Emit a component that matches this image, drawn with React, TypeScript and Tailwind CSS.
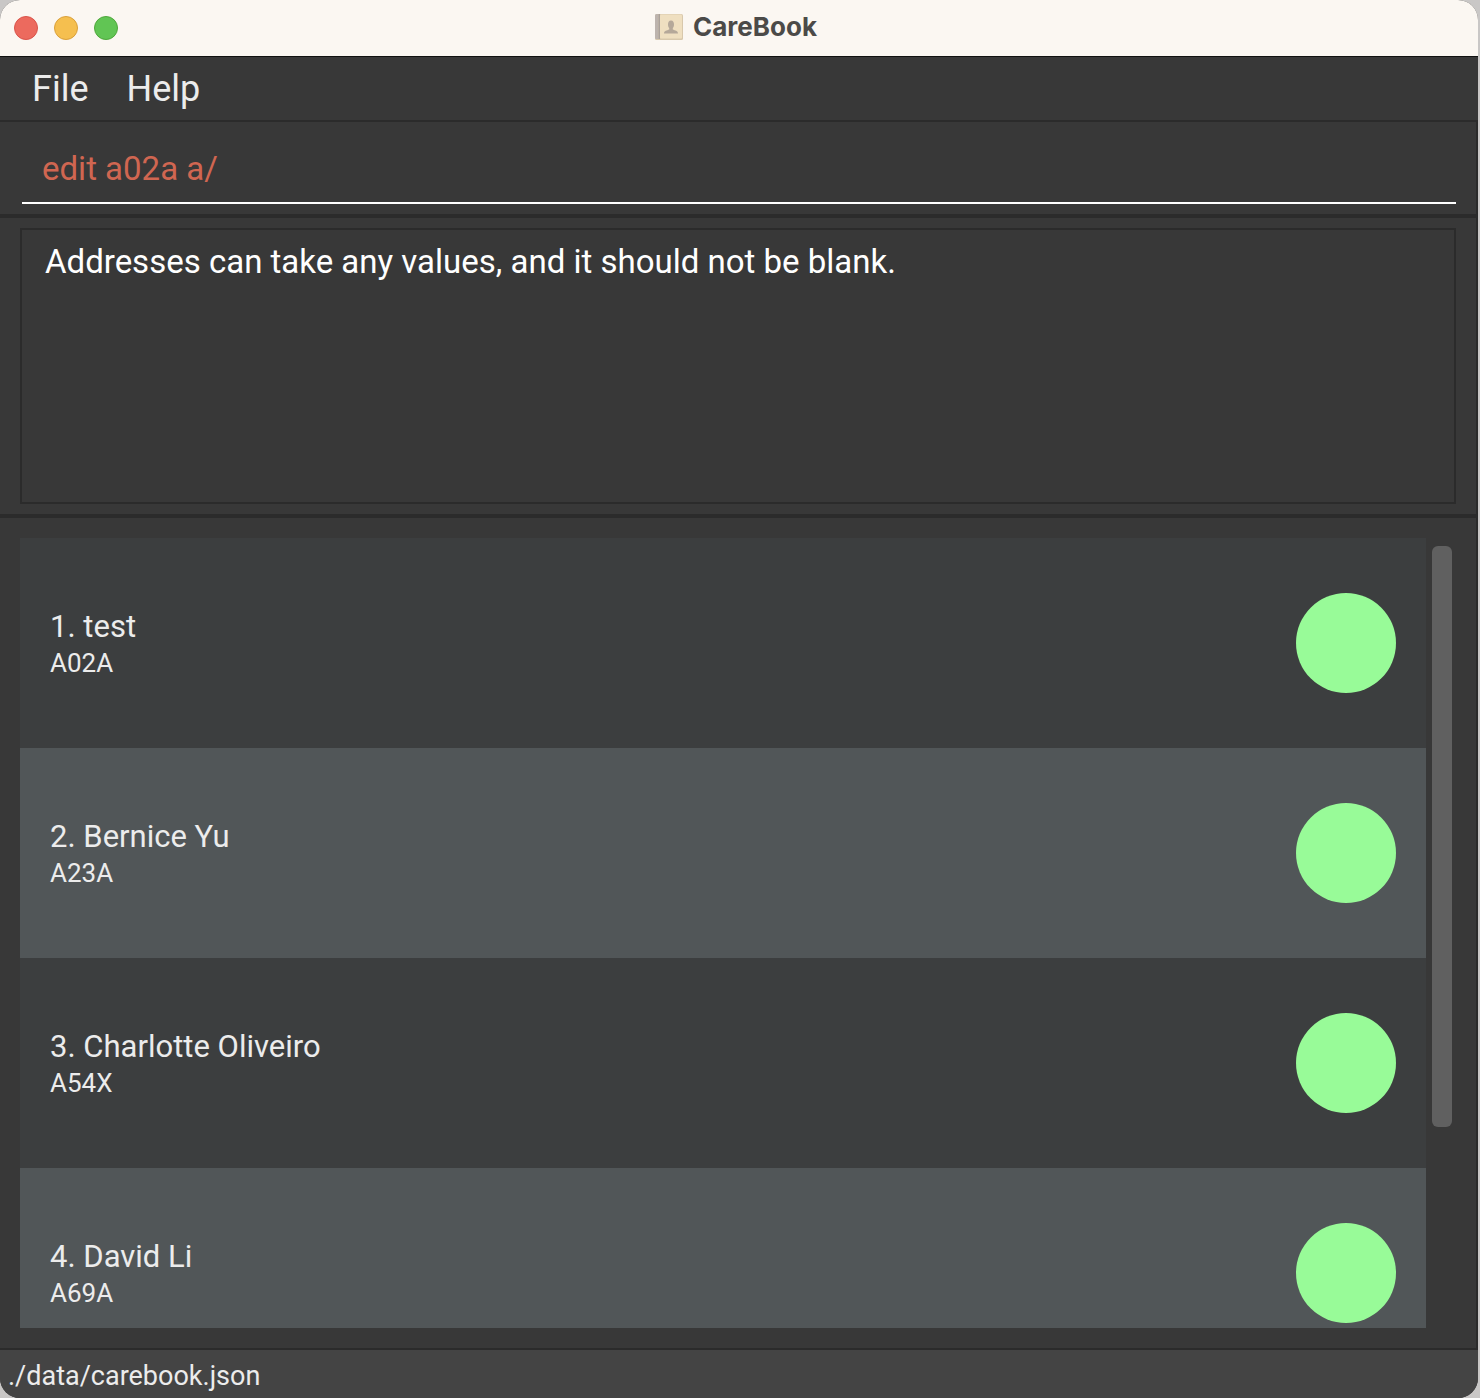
import React from "react";

const people = [
  { name: "test", ward: "A02A" },
  { name: "Bernice Yu", ward: "A23A" },
  { name: "Charlotte Oliveiro", ward: "A54X" },
  { name: "David Li", ward: "A69A" },
];

function BookIcon() {
  return (
    <svg viewBox="0 0 28 28" className="size-7" aria-hidden="true">
      <rect x="0" y="1" width="28" height="26" rx="1.5" fill="#d8c8ac" />
      <rect x="5" y="1.5" width="22" height="24" rx="1" fill="#efdfc0" />
      <path d="M1.500 1H3.500V26H1.500Q0 26 0 24.500V2.500Q0 1 1.500 1Z" fill="#bdb4ae" />
      <rect x="3.500" y="1" width="1.500" height="25" fill="#aaa19b" />
      <path
        d="M16 7.500C18.200 7.500 19 9.300 19 11.500C19 13.300 18.400 14.500 17.800 15.200V16.500C20 17.500 23 17.500 23 20.500H9C9 17.500 12 17.500 14.200 16.500V15.200C13.600 14.500 13 13.300 13 11.500C13 9.300 13.800 7.500 16 7.500Z"
        fill="#b5a899"
      />
    </svg>
  );
}

function TitleBar() {
  return (
    <header className="flex h-14 shrink-0 items-center bg-[#fbf7f2] pr-5 pl-3.5">
      <div className="flex flex-1 gap-4">
        <button aria-label="Close" className="size-6 rounded-full border border-[#d9544b] bg-[#ec6a5e]" />
        <button aria-label="Minimize" className="size-6 rounded-full border border-[#d9a03c] bg-[#f5bf4f]" />
        <button aria-label="Zoom" className="size-6 rounded-full border border-[#4fa73c] bg-[#61c554]" />
      </div>
      <div className="flex items-center gap-2.5 pb-0.5">
        <BookIcon />
        <h1 className="font-['Inter','Liberation_Sans',sans-serif] text-[26px] leading-8 font-bold text-[#4b4a48]">
          CareBook
        </h1>
      </div>
      <div className="flex-1" />
    </header>
  );
}

export default function App() {
  return (
    <div className="h-screen bg-[#c9c7c6] pr-0.5 font-['Roboto','Liberation_Sans',sans-serif]">
      <div className="flex h-full flex-col overflow-hidden rounded-[20px] bg-[#383838]">
        <TitleBar />
        <nav className="flex h-[66px] shrink-0 items-center gap-[38px] border-t border-b-2 border-t-[#111111] border-b-[#2b2b2b] px-8 text-4xl text-[#ececec]">
          <button>File</button>
          <button>Help</button>
        </nav>
        <main className="flex min-h-0 flex-1 flex-col border-r-2 border-[#2b2b2b]">
          <section className="border-b-4 border-[#2b2b2b] pr-5 pb-2.5 pl-[22px]">
            <input
              aria-label="Command"
              defaultValue="edit a02a a/"
              className="block h-[82px] w-full border-b-2 border-white bg-transparent px-5 pt-3 text-[33px] text-[#d06651] outline-none"
            />
          </section>
          <section className="border-b-4 border-[#2b2b2b] px-5 py-2.5">
            <textarea
              aria-label="Result"
              readOnly
              defaultValue="Addresses can take any values, and it should not be blank."
              className="block h-[276px] w-full resize-none border-2 border-[#2b2b2b] bg-transparent px-[23px] py-3 text-[33px] leading-10 text-white outline-none"
            />
          </section>
          <section className="flex min-h-0 flex-1 gap-1.5 py-5 pr-6 pl-5">
            <ol className="min-w-0 flex-1 overflow-hidden">
              {people.map((p, i) => (
                <li
                  key={p.name}
                  className="flex h-[210px] items-center justify-between bg-[#3c3e3f] px-[30px] even:bg-[#515658]"
                >
                  <div className="text-[#ececec]">
                    <h2 className="text-[31px] leading-10">
                      {i + 1}. {p.name}
                    </h2>
                    <p className="text-[26px] leading-8">{p.ward}</p>
                  </div>
                  <span className="size-[100px] rounded-full bg-[#98fb98]" />
                </li>
              ))}
            </ol>
            <div className="w-5 py-2">
              <div className="h-3/4 w-full rounded-md bg-[#606060]" />
            </div>
          </section>
        </main>
        <footer className="flex h-[50px] shrink-0 items-center border-t-2 border-[#2b2b2b] bg-[#444444] px-2 pt-1 text-[27px] text-[#ececec]">
          ./data/carebook.json
        </footer>
      </div>
    </div>
  );
}
